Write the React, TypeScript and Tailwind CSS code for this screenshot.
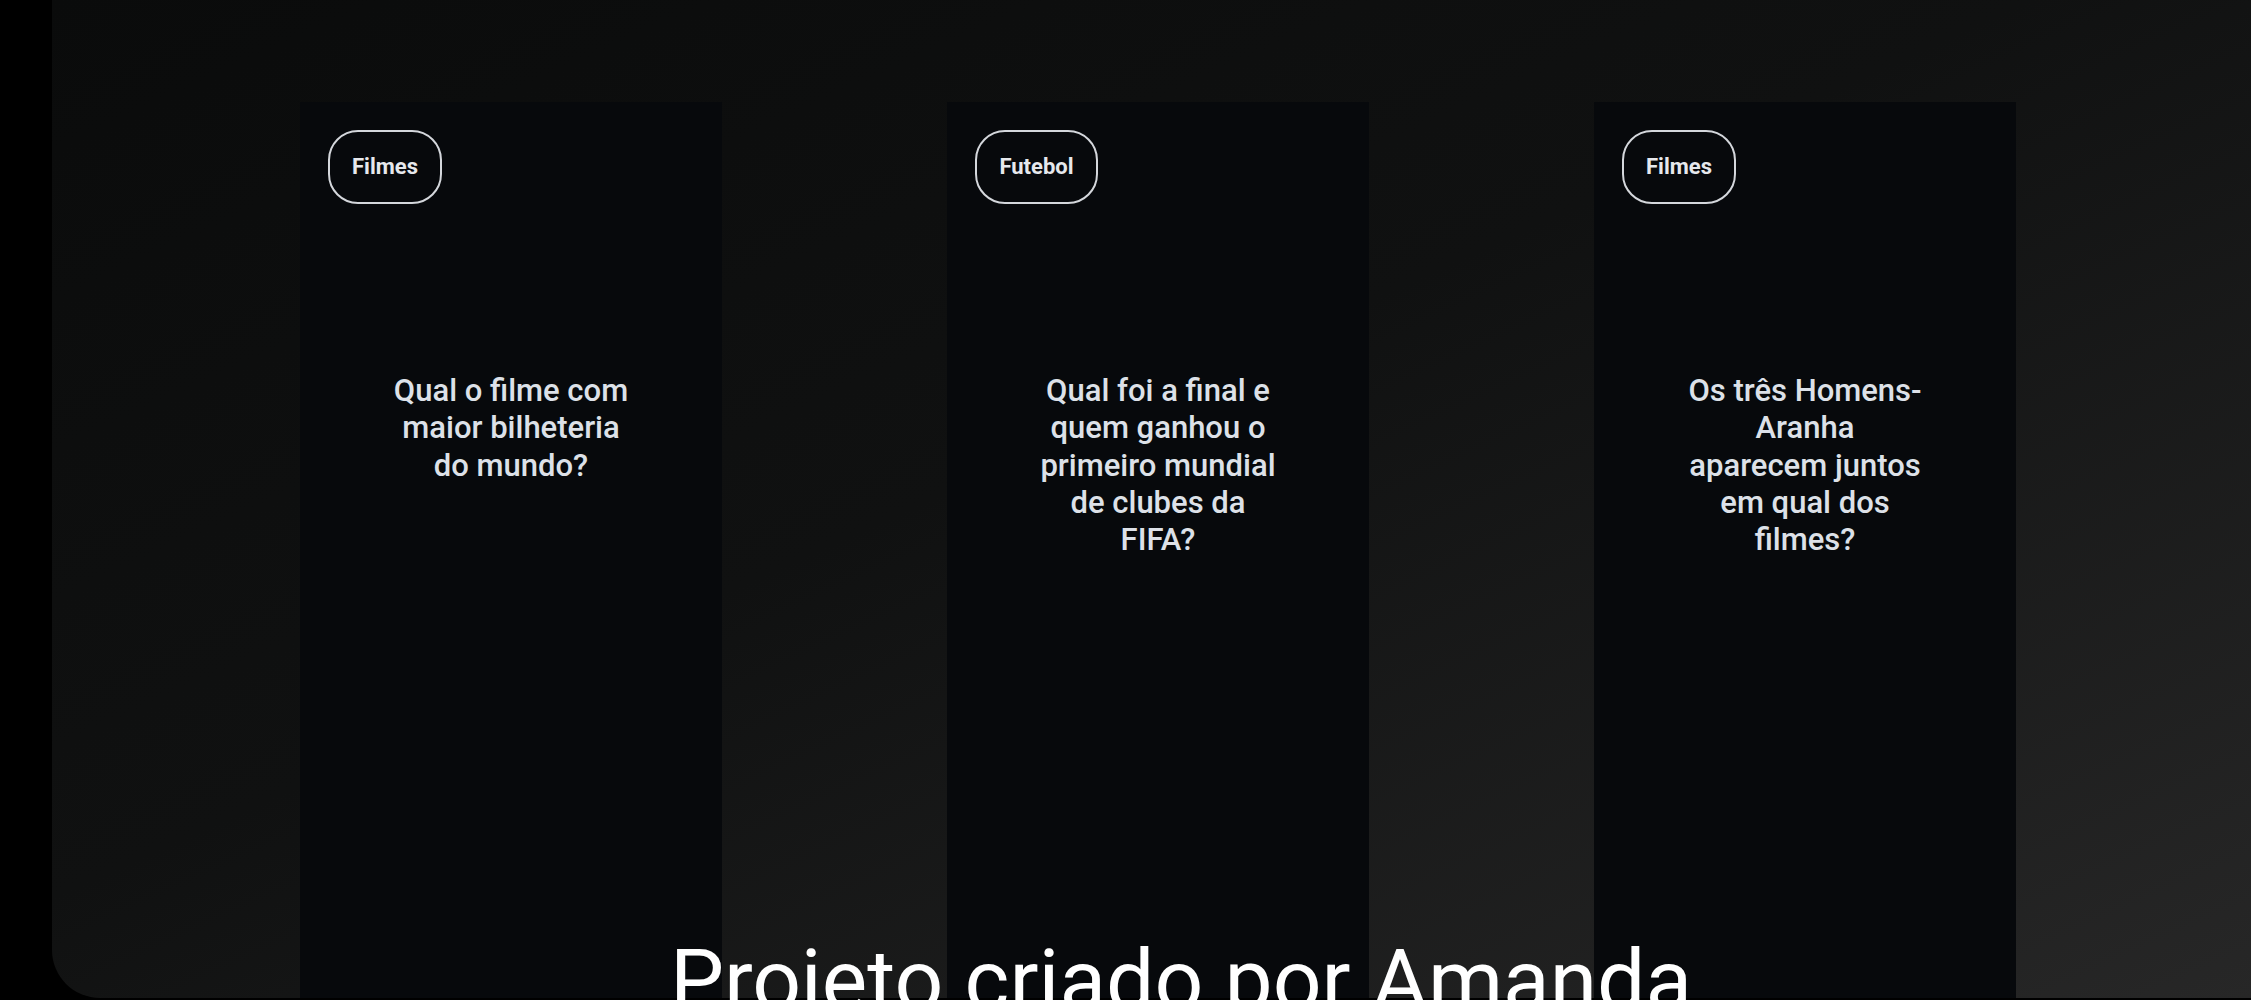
const cards = [
  { tag: "Filmes", tagW: "w-[114px]", question: "Qual o filme com maior bilheteria do mundo?" },
  { tag: "Futebol", tagW: "w-[123px]", question: "Qual foi a final e quem ganhou o primeiro mundial de clubes da FIFA?" },
  { tag: "Filmes", tagW: "w-[114px]", question: "Os três Homens-Aranha aparecem juntos em qual dos filmes?" },
]

const Card = ({ tag, tagW, question }: { tag: string; tagW: string; question: string }) => {
  return (
    <div className="w-[422px] shrink-0 h-[960px] bg-[#07090c] p-7 flex flex-col">
      <span className={`${tagW} h-[74px] flex items-center justify-center pb-[2px] rounded-[30px] border-2 border-[#d4d7dc] text-[22px] font-bold text-[#e6e8ec]`}>
        {tag}
      </span>
      <p className="mt-[168px] w-[238px] mx-auto text-center text-[31px] leading-[37.3px] font-medium text-[#dde1e8]">
        {question}
      </p>
    </div>
  )
}

export default function App() {
  return (
    <div className="relative w-full h-[1000px] overflow-hidden bg-black flex" style={{ fontFamily: "Roboto, 'Noto Sans', sans-serif" }}>
      <div className="ml-[52px] flex-1 h-[998px] rounded-bl-[48px] bg-linear-to-br from-[#0a0b0b] via-[#101111] via-45% to-[#272727] overflow-hidden">
        <div className="flex gap-[225px] pl-[248px] pt-[102px]">
          {cards.map((c, i) => (
            <Card key={i} {...c} />
          ))}
        </div>
      </div>
      <h1 className="absolute left-[670px] top-[938px] text-[85.75px] leading-none font-normal text-white whitespace-nowrap">
        Projeto criado por Amanda
      </h1>
    </div>
  )
}
